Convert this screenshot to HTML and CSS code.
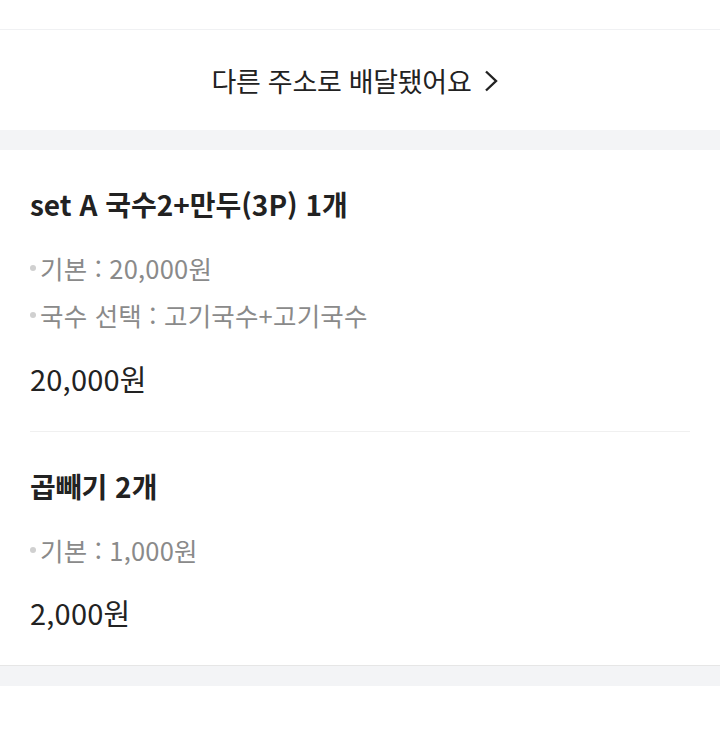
FILE: index.html
```html
<!DOCTYPE html>
<html lang="ko">
<head>
<meta charset="utf-8">
<link rel="stylesheet" href="styles.css">
</head>
<body>
<div class="top-space"></div>
<a class="addr-link">
  <span>다른 주소로 배달됐어요</span>
  <svg class="chev" width="14" height="22" viewBox="0 0 14 22"><path d="M2 1.5 L12 11 L2 20.5" fill="none" stroke="#222" stroke-width="2.4"/></svg>
</a>
<div class="band"></div>
<section class="items">
  <div class="item">
    <h2 class="title">set A 국수2+만두(3P) 1개</h2>
    <ul class="opts">
      <li>기본 : 20,000원</li>
      <li>국수 선택 : 고기국수+고기국수</li>
    </ul>
    <div class="price">20,000원</div>
  </div>
  <div class="item">
    <h2 class="title">곱빼기 2개</h2>
    <ul class="opts">
      <li>기본 : 1,000원</li>
    </ul>
    <div class="price">2,000원</div>
  </div>
</section>
<div class="band"></div>
</body>
</html>
```
FILE: styles.css
```css
* { box-sizing: border-box; }
html, body { margin: 0; padding: 0; background: #fff; }
body { font-family: "Noto Sans CJK KR", "Noto Sans", sans-serif; color: #222; width: 720px; }
.top-space { height: 30px; border-bottom: 1px solid #f0f1f3; }
.addr-link { display: flex; align-items: center; justify-content: center; gap: 13px; height: 100px; padding-right: 10px; font-size: 27px; color: #222; letter-spacing: -0.3px; }
.addr-link span { line-height: 1; }
.chev { margin-top: 2px; }
.band { height: 20px; background: #f3f4f6; }
.items { padding: 0 30px; border-bottom: 1px solid #e6e6e6; }
.item { padding: 30px 0 29px; }
.item + .item { border-top: 1px solid #f0f0f0; }
.title { margin: 0; font-size: 28px; font-weight: 700; line-height: 48px; letter-spacing: 0; }
.opts { list-style: none; margin: 16px 0 0; padding: 0; }
.opts li { position: relative; padding-left: 10px; font-size: 25.5px; line-height: 47px; color: #8a8a8a; letter-spacing: 0.2px; }
.opts li::before { content: ""; position: absolute; left: 0; top: 21px; width: 6px; height: 6px; border-radius: 50%; background: #d0d0d0; }
.price { margin-top: 15.5px; font-size: 29px; line-height: 48px; letter-spacing: 0.2px; }
```
